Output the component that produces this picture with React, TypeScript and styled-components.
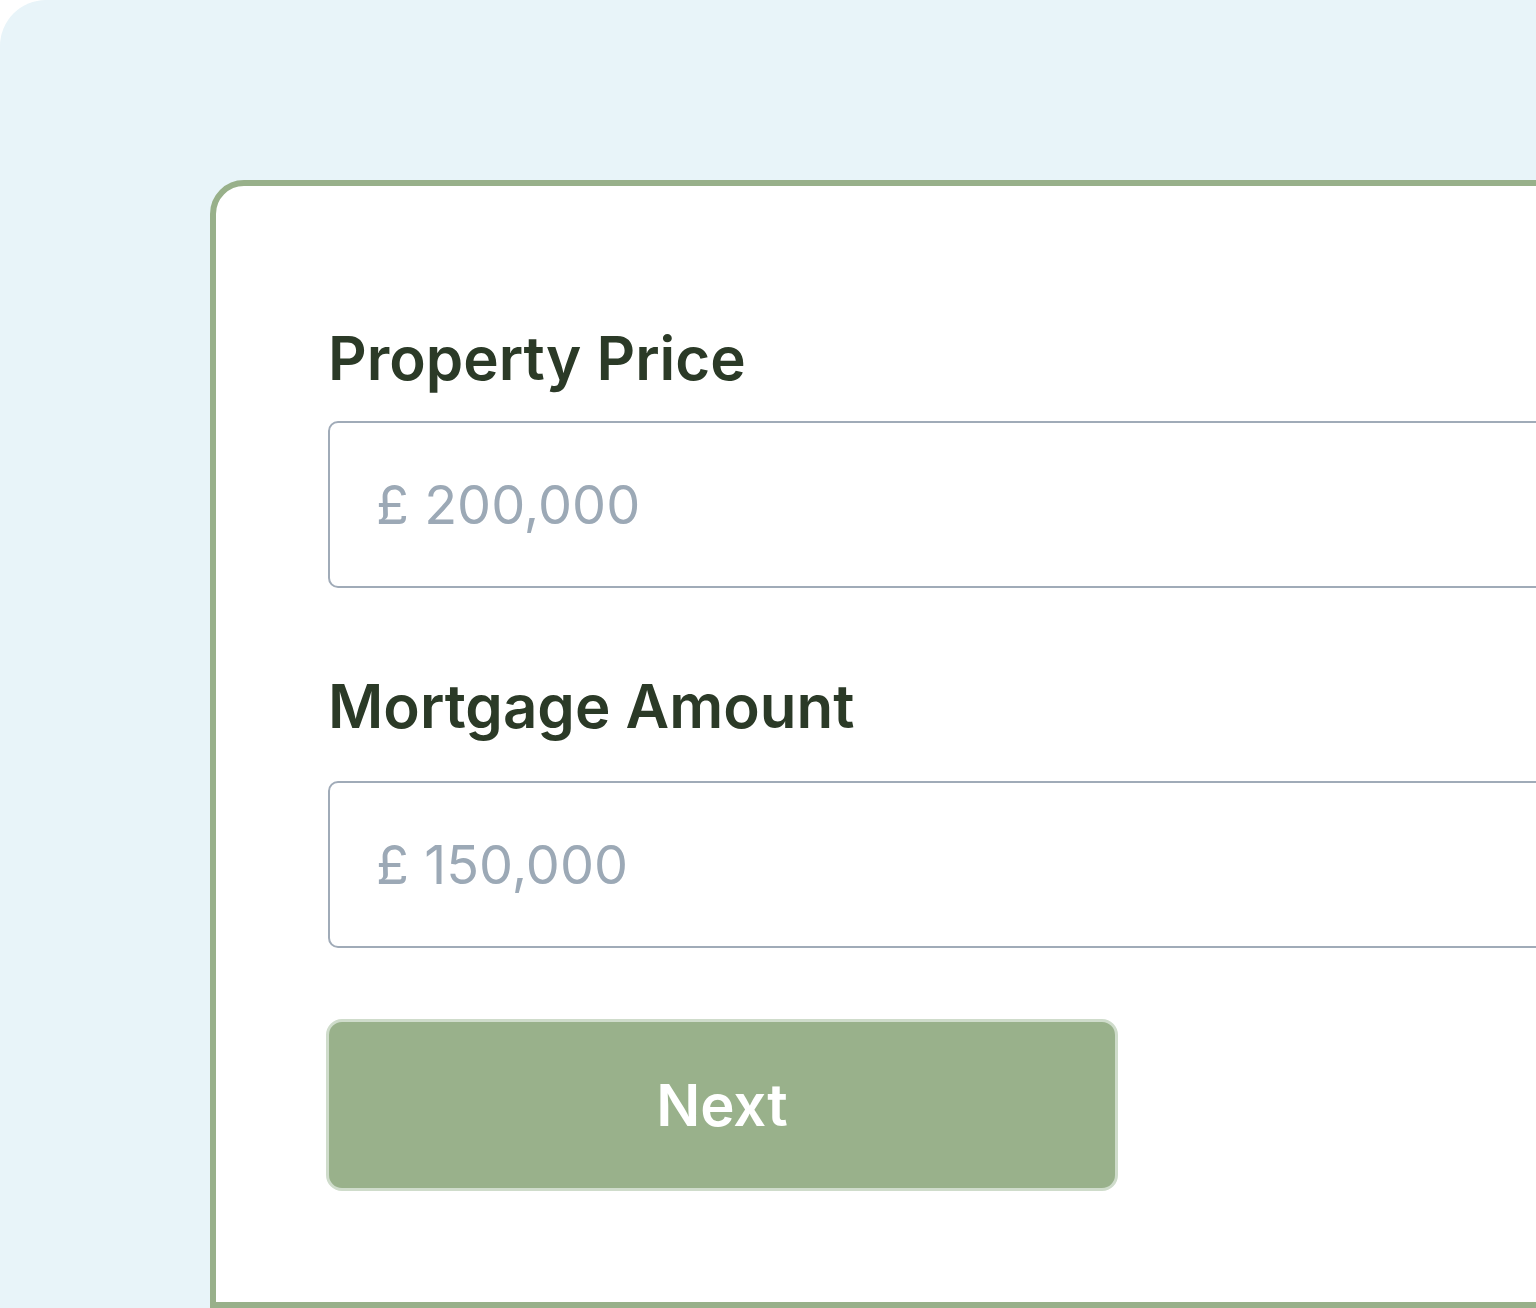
import React from "react";
import styled, { createGlobalStyle } from "styled-components";

const Global = createGlobalStyle`
  html, body { margin: 0; padding: 0; background: #ffffff; }
  body { font-family: Inter, "Noto Sans", sans-serif; }
  * { box-sizing: border-box; }
`;

const Backdrop = styled.div`
  width: 1536px;
  height: 1308px;
  background: #e8f4f9;
  border-top-left-radius: 46px;
  overflow: hidden;
  padding: 180px 0 0 210px;
`;

const Card = styled.div`
  width: 1560px;
  height: 1128px;
  background: #ffffff;
  border: 6px solid #98b08a;
  border-radius: 34px 34px 0 0;
  padding: 142px 0 0 112px;
  display: flex;
  flex-direction: column;
`;

const Field = styled.div<{ $top: number; $gap: number }>`
  display: flex;
  flex-direction: column;
  gap: ${(p) => p.$gap}px;
  margin-top: ${(p) => p.$top}px;
`;

const Label = styled.label`
  font-family: Inter, sans-serif;
  font-weight: 600;
  font-size: 60px;
  line-height: 60px;
  color: #2b3a27;
`;

const Input = styled.input`
  width: 1400px;
  height: 167px;
  border: 2px solid #a0abb8;
  border-radius: 10px;
  padding: 0 0 0 46px;
  font-family: Inter, sans-serif;
  font-size: 54px;
  color: #2b3a27;
  background: #ffffff;
  outline: none;
  &::placeholder {
    color: #9ca9b6;
    opacity: 1;
  }
`;

const Button = styled.button`
  margin-top: 71px;
  margin-left: -2px;
  width: 792px;
  height: 172px;
  background: #99b18b;
  border: 3px solid #cfdccb;
  border-radius: 16px;
  color: #ffffff;
  font-family: Inter, sans-serif;
  font-weight: 600;
  font-size: 58px;
  line-height: 1;
  display: flex;
  align-items: center;
  justify-content: center;
  cursor: pointer;
  padding: 0;
`;

export default function App() {
  return (
    <>
      <Global />
      <Backdrop>
        <Card>
          <Field $top={0} $gap={33}>
            <Label htmlFor="price">Property Price</Label>
            <Input id="price" placeholder="£ 200,000" />
          </Field>
          <Field $top={88} $gap={45}>
            <Label htmlFor="mortgage">Mortgage Amount</Label>
            <Input id="mortgage" placeholder="£ 150,000" />
          </Field>
          <Button type="button">Next</Button>
        </Card>
      </Backdrop>
    </>
  );
}
